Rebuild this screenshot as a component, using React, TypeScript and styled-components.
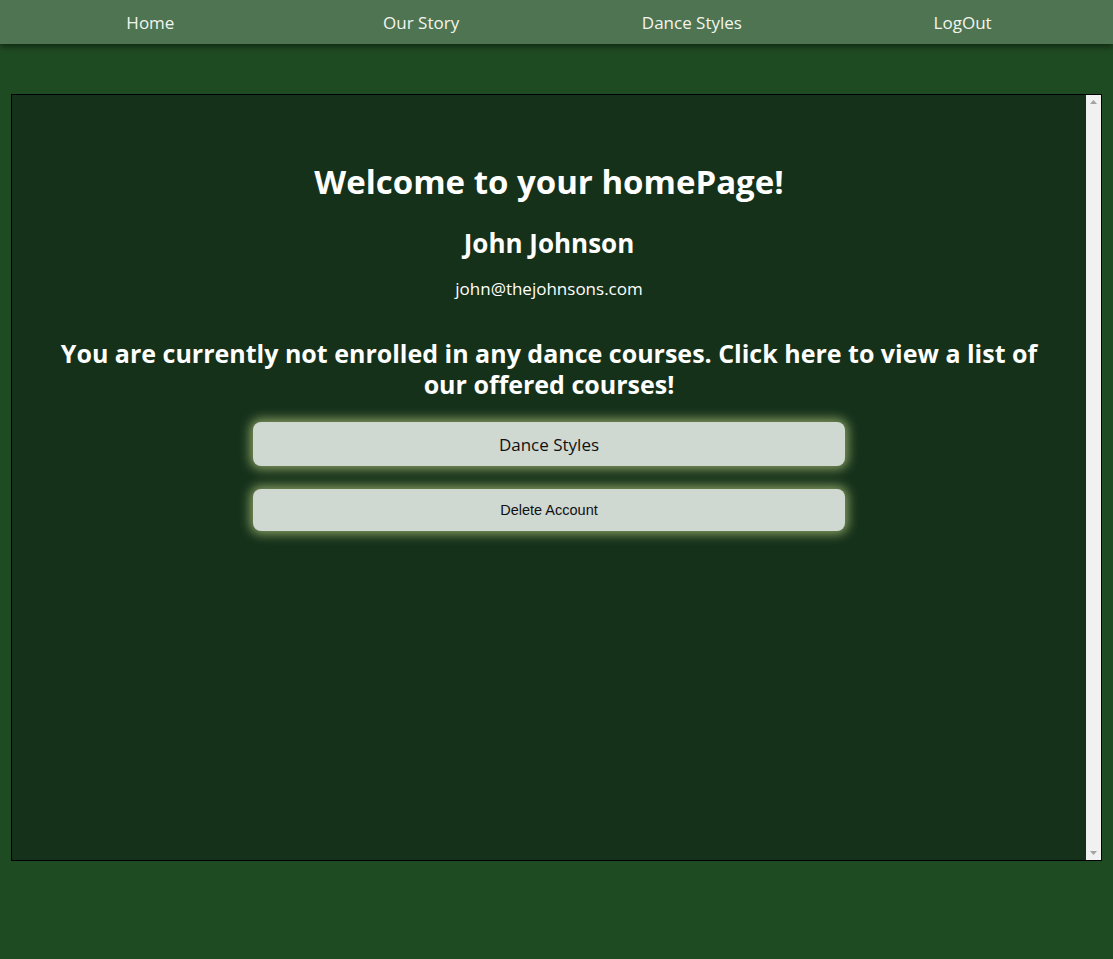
import React from "react";
import styled, { createGlobalStyle } from "styled-components";

const Global = createGlobalStyle`
  html, body {
    margin: 0;
    padding: 0;
    background: #1f4b22;
    font-family: "Open Sans", "Noto Sans", sans-serif;
  }
`;

const Nav = styled.nav`
  height: 44px;
  background: #4e7451;
  box-shadow: 0 3px 6px rgba(0, 0, 0, 0.45);
  display: grid;
  grid-template-columns: repeat(4, 1fr);
  padding: 0 15px;
  align-items: center;
`;

const NavLink = styled.a`
  color: #f4f4ee;
  text-align: center;
  font-size: 17px;
  text-decoration: none;
`;

const Panel = styled.main`
  width: 98%;
  height: 80vh;
  box-sizing: border-box;
  margin: 50px auto 0;
  border: 1px solid #000;
  background: #15311a;
  display: flex;
`;

const Content = styled.div`
  flex: 1;
  display: flex;
  flex-direction: column;
  align-items: center;
  color: #fff;
  text-align: center;
  padding-top: 62px;
  overflow: hidden;
`;

const ScrollRail = styled.div`
  width: 15px;
  background: #f1f1f1;
  display: flex;
  flex-direction: column;
  justify-content: space-between;
  align-items: center;
  padding: 5px 0;
`;

const Arrow = styled.svg`
  display: block;
  width: 7px;
  height: 4px;
`;

const Title = styled.h1`
  margin: 0;
  font-size: 33px;
  font-weight: 700;
  line-height: 50px;
`;

const Name = styled.h2`
  margin: 18px 0 0;
  font-size: 26px;
  font-weight: 700;
  line-height: 36px;
`;

const Email = styled.p`
  margin: 16px 0 0;
  font-size: 17px;
  line-height: 24px;
`;

const Notice = styled.h3`
  margin: 37px 40px 0;
  font-size: 25px;
  font-weight: 700;
  line-height: 31px;
`;

const Button = styled.button<{ $small?: boolean }>`
  width: 592px;
  height: ${(p) => (p.$small ? "42px" : "44px")};
  margin-top: ${(p) => (p.$small ? "23px" : "22px")};
  border: none;
  border-radius: 8px;
  background: #d0d8d2;
  color: #111;
  box-shadow: 0 0 11px 3px rgba(185, 205, 130, 0.7);
  font-family: ${(p) =>
    p.$small ? '"Liberation Sans", Arial, sans-serif' : '"Open Sans", "Noto Sans", sans-serif'};
  font-size: ${(p) => (p.$small ? "14.5px" : "17px")};
  cursor: pointer;
`;

export default function App() {
  return (
    <>
      <Global />
      <Nav>
        <NavLink href="#">Home</NavLink>
        <NavLink href="#">Our Story</NavLink>
        <NavLink href="#">Dance Styles</NavLink>
        <NavLink href="#">LogOut</NavLink>
      </Nav>
      <Panel>
        <Content>
          <Title>Welcome to your homePage!</Title>
          <Name>John Johnson</Name>
          <Email>john@thejohnsons.com</Email>
          <Notice>
            You are currently not enrolled in any dance courses. Click here to view a list of our
            offered courses!
          </Notice>
          <Button>Dance Styles</Button>
          <Button $small>Delete Account</Button>
        </Content>
        <ScrollRail>
          <Arrow viewBox="0 0 7 4">
            <polygon points="0,4 7,4 3.5,0" fill="#a3a3a3" />
          </Arrow>
          <Arrow viewBox="0 0 7 4">
            <polygon points="0,0 7,0 3.5,4" fill="#a3a3a3" />
          </Arrow>
        </ScrollRail>
      </Panel>
    </>
  );
}
